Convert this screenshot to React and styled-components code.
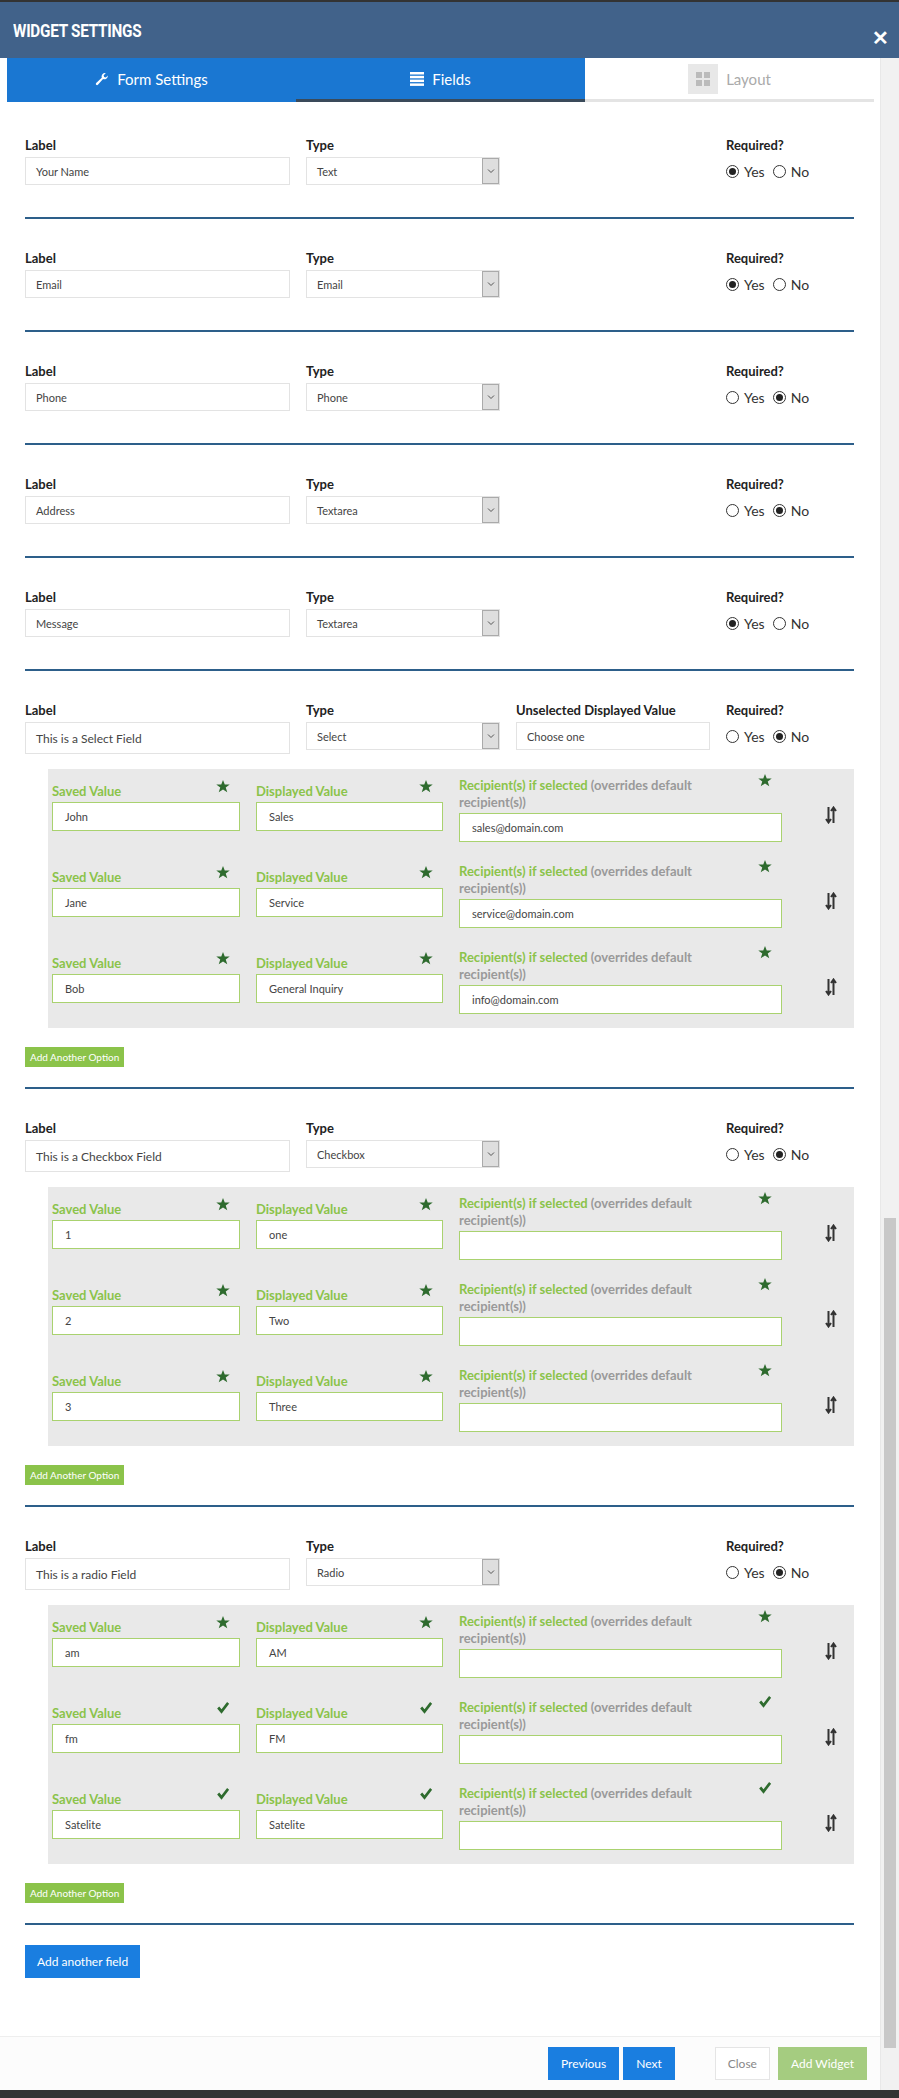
import React from "react";
import styled, { createGlobalStyle } from "styled-components";

const Global = createGlobalStyle`
  body { margin: 0; font-family: Lato, "Open Sans", sans-serif; background: #fff; }
  * { box-sizing: border-box; }
`;

const Page = styled.div`
  width: 899px; height: 2098px; display: flex; flex-direction: column; overflow: hidden;
  border-top: 2px solid #333;
`;
const Header = styled.div`
  height: 56px; background: #41628a; display: flex; align-items: center; justify-content: space-between;
  padding: 0 10px 0 13px; color: #fff;
`;
const Title = styled.h1`
  margin: 0; font-size: 18px; font-weight: 700; letter-spacing: -0.3px; font-family: "Roboto", sans-serif; transform: scaleX(0.85); transform-origin: left;
`;
const CloseX = styled.span` font-size: 20px; font-weight: 700; margin-top: 14px; `;
const Body = styled.div` flex: 1; display: flex; min-height: 0; `;
const Main = styled.div` flex: 1; display: flex; flex-direction: column; `;
const Scrollbar = styled.div`
  width: 19px; background: #f1f1f1; position: relative; border-left: 1px solid #e8e8e8;
`;
const Thumb = styled.div`
  position: absolute; left: 3px; right: 3px; top: ${p => p.$top}px; height: ${p => p.$h}px; background: #c8c8c8;
`;
const Tabs = styled.div` display: flex; margin: 0 6px 0 7px; height: 44px; `;
const Tab = styled.div`
  flex: 1; display: flex; align-items: center; justify-content: center; gap: 8px; font-size: 15px;
  background: ${p => (p.$active ? "#1a77d2" : "#fff")}; color: ${p => (p.$active ? "#fff" : "#aaa")};
  border-bottom: 3px solid ${p => (p.$dark ? "#3a4a5a" : p.$active ? "#1a77d2" : "#e4e4e4")};
`;
const LayoutIcon = styled.span`
  width: 30px; height: 30px; background: #e8e8e8; display: inline-flex; align-items: center; justify-content: center;
`;
const Content = styled.div` padding: 0 26px 0 25px; flex: 1; `;
const Field = styled.div` padding: ${p => (p.$first ? 35 : 31)}px 0 0; `;
const FieldGrid = styled.div`
  display: grid; grid-template-columns: 265px 194px 194px 1fr; column-gap: 16px; row-gap: 4px;
`;
const Lbl = styled.div` font-size: 13px; font-weight: 700; color: #222; height: 16px; line-height: 16px; `;
const Input = styled.div`
  height: ${p => (p.$tall ? 32 : 28)}px; border: 1px solid #e3e3e3; font-size: ${p => (p.$tall ? 12 : 11)}px; color: #444;
  display: flex; align-items: center; padding-left: 10px; background: #fff;
`;
const Select = styled(Input)` justify-content: space-between; padding-right: 0; `;
const Caret = styled.span`
  width: 17px; height: 100%; background: #dedede; border: 1px solid #aaa; display: flex; align-items: center; justify-content: center;
`;
const Radios = styled.div` display: flex; align-items: center; gap: 8px; height: 28px; font-size: 14px; color: #333; `;
const Radio = styled.span` display: inline-flex; align-items: center; gap: 5px; `;
const Circle = styled.span`
  width: 13px; height: 13px; border: 1px solid #333; border-radius: 50%; display: inline-flex; align-items: center; justify-content: center;
  &::after { content: ""; width: 7px; height: 7px; border-radius: 50%; background: ${p => (p.$on ? "#222" : "transparent")}; }
`;
const Divider = styled.div` height: 2px; background: #2d5f8a; margin-top: ${p => p.$mt}px; `;
const OptBox = styled.div`
  background: #e9e9e9; margin: 15px 0 0 23px; padding: 8px 0 14px 4px; display: flex; flex-direction: column; gap: 21px;
`;
const OptRow = styled.div`
  display: grid; grid-template-columns: 188px 187px 323px 1fr; column-gap: 16px; align-items: start;
`;
const OptCol = styled.div` display: flex; flex-direction: column; gap: 2px; padding-top: ${p => p.$pt || 0}px; `;
const OptLbl = styled.div`
  position: relative; font-size: 13px; font-weight: 700; color: #8bc34a; line-height: 17px; padding-right: 44px;
  span { color: #999; }
`;
const Mark = styled.span` position: absolute; right: 10px; top: -4px; `;
const OptInput = styled.div`
  height: 29px; border: 1px solid #a9d26f; background: #fff; font-size: 11px; color: #444; display: flex; align-items: center; padding-left: 12px;
`;
const SortIcon = styled.div` align-self: center; justify-self: center; margin-left: 10px; padding-top: 14px; `;
const GreenBtn = styled.button`
  margin-top: 19px; background: #8bc34a; color: #fff; border: 0; font-size: 10px; font-family: inherit; padding: 0 5px; height: 20px; display: block;
`;
const BlueBtn = styled.button`
  margin-top: 20px; background: #1a7ee0; color: #fff; border: 0; font-size: 12px; font-family: inherit; height: 33px; padding: 0 12px;
`;
const Footer = styled.div`
  height: 54px; margin-top: 40px; background: #fcfcfc; border-top: 1px solid #eee; display: flex; align-items: center; justify-content: flex-end; gap: 4px; padding-right: 13px;
`;
const FBtn = styled.button`
  height: 33px; padding: 0 12px; font-size: 12px; font-family: inherit; border: 1px solid ${p => p.$border};
  background: ${p => p.$bg}; color: ${p => p.$color}; margin-left: ${p => p.$ml || 0}px;
`;
const Bottom = styled.div` height: 8px; background: #333; `;

const Star = () => (
  <svg width="14" height="14" viewBox="0 0 24 24"><path fill="#2e6b2e" d="M12 1.5l3 8h8.5l-6.8 5 2.6 8.2L12 17.8l-7.3 4.9 2.6-8.2-6.8-5H9z" /></svg>
);
const Check = () => (
  <svg width="14" height="14" viewBox="0 0 24 24"><path fill="#2e6b2e" d="M2 13l3.5-3.5 4 4.5L19 1.5l3.5 3L9.5 22z" /></svg>
);
const Sort = () => (
  <svg width="12" height="18" viewBox="0 0 12 18" fill="none" stroke="#333" strokeWidth="2">
    <path d="M3.5 1v15M1 13l2.5 3.5L6 13" /><path d="M8.5 17V2M6 5l2.5-3.5L11 5" />
  </svg>
);
const Chevron = () => (
  <svg width="8" height="6" viewBox="0 0 8 6" fill="none" stroke="#555" strokeWidth="1"><path d="M1 1.5l3 3 3-3" /></svg>
);

const fields = [
  { label: "Your Name", type: "Text", req: true },
  { label: "Email", type: "Email", req: true },
  { label: "Phone", type: "Phone", req: false },
  { label: "Address", type: "Textarea", req: false },
  { label: "Message", type: "Textarea", req: true },
  { label: "This is a Select Field", type: "Select", req: false, unsel: "Choose one",
    opts: [["John", "Sales", "sales@domain.com"], ["Jane", "Service", "service@domain.com"], ["Bob", "General Inquiry", "info@domain.com"]] },
  { label: "This is a Checkbox Field", type: "Checkbox", req: false,
    opts: [["1", "one", ""], ["2", "Two", ""], ["3", "Three", ""]] },
  { label: "This is a radio Field", type: "Radio", req: false,
    opts: [["am", "AM", ""], ["fm", "FM", "", 1], ["Satelite", "Satelite", "", 1]] },
];

function Options({ opts }) {
  return (
    <OptBox>
      {opts.map(([s, d, r, chk], i) => {
        const M = chk ? Check : Star;
        return (
          <OptRow key={i}>
            <OptCol $pt={6}><OptLbl>Saved Value<Mark><M /></Mark></OptLbl><OptInput>{s}</OptInput></OptCol>
            <OptCol $pt={6}><OptLbl>Displayed Value<Mark><M /></Mark></OptLbl><OptInput>{d}</OptInput></OptCol>
            <OptCol><OptLbl>Recipient(s) if selected <span>(overrides default recipient(s))</span><Mark><M /></Mark></OptLbl><OptInput>{r}</OptInput></OptCol>
            <SortIcon><Sort /></SortIcon>
          </OptRow>
        );
      })}
    </OptBox>
  );
}

export default function App() {
  return (
    <Page>
      <Global />
      <Header><Title>WIDGET SETTINGS</Title><CloseX>✕</CloseX></Header>
      <Body>
        <Main>
          <Tabs>
            <Tab $active>
              <svg width="14" height="16" viewBox="0 0 24 24"><path fill="#fff" d="M22 6.5a6 6 0 0 1-8.2 5.6L5 22a2.1 2.1 0 0 1-3-3l9.6-9A6 6 0 0 1 18.5 2l-3.7 3.7.9 2.9 2.9.9L22 6z" /></svg>
              Form Settings
            </Tab>
            <Tab $active $dark>
              <svg width="14" height="14" viewBox="0 0 14 14" fill="#fff"><rect y="0" width="14" height="2.5" /><rect y="3.8" width="14" height="2.5" /><rect y="7.6" width="14" height="2.5" /><rect y="11.4" width="14" height="2.5" /></svg>
              Fields
            </Tab>
            <Tab>
              <LayoutIcon><svg width="14" height="14" viewBox="0 0 14 14" fill="#bbb"><rect width="6" height="6" /><rect x="8" width="6" height="6" /><rect y="8" width="6" height="6" /><rect x="8" y="8" width="6" height="6" /></svg></LayoutIcon>
              Layout
            </Tab>
          </Tabs>
          <Content>
            {fields.map((f, i) => (
              <Field key={i} $first={i === 0}>
                <FieldGrid>
                  <Lbl>Label</Lbl><Lbl>Type</Lbl><Lbl>{f.unsel ? "Unselected Displayed Value" : ""}</Lbl><Lbl>Required?</Lbl>
                  <Input $tall={!!f.opts}>{f.label}</Input>
                  <Select>{f.type}<Caret><Chevron /></Caret></Select>
                  <div>{f.unsel && <Input>{f.unsel}</Input>}</div>
                  <Radios>
                    <Radio><Circle $on={f.req} />Yes</Radio>
                    <Radio><Circle $on={!f.req} />No</Radio>
                  </Radios>
                </FieldGrid>
                {f.opts && <Options opts={f.opts} />}
                {f.opts && <GreenBtn>Add Another Option</GreenBtn>}
                <Divider $mt={f.opts ? 20 : 32} />
              </Field>
            ))}
            <BlueBtn>Add another field</BlueBtn>
          </Content>
          <Footer>
            <FBtn $bg="#1a7ee0" $color="#fff" $border="#1a7ee0">Previous</FBtn>
            <FBtn $bg="#1a7ee0" $color="#fff" $border="#1a7ee0">Next</FBtn>
            <FBtn $bg="#fff" $color="#888" $border="#e5e5e5" $ml={36}>Close</FBtn>
            <FBtn $bg="#a5cc80" $color="#fff" $border="#a5cc80" $ml={4}>Add Widget</FBtn>
          </Footer>
        </Main>
        <Scrollbar><Thumb $top={1160} $h={830} /></Scrollbar>
      </Body>
      <Bottom />
    </Page>
  );
}
